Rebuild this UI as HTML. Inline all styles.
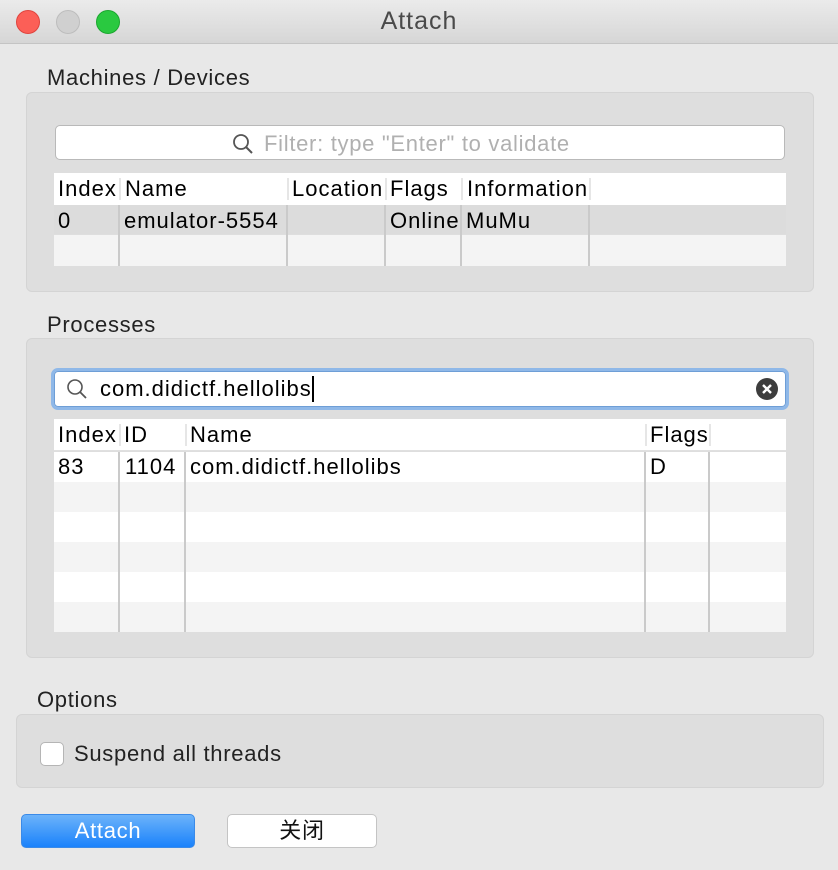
<!DOCTYPE html>
<html><head><meta charset="utf-8"><style>
*{margin:0;padding:0;box-sizing:border-box}
body{width:838px;height:870px;background:#e8e8e8;font-family:"Liberation Sans","Noto Sans CJK SC",sans-serif;font-size:22px;letter-spacing:0.7px;color:#1a1a1a;position:relative;overflow:hidden}
.a{position:absolute}
.title{left:0;top:0;width:838px;height:44px;background:linear-gradient(#ebebeb,#d6d6d6);border-bottom:1px solid #c4c4c4}
.dot{width:24px;height:24px;border-radius:50%;top:10px}
.box{background:#dedede;border:1px solid #d4d4d4;border-radius:6px}
.lbl{color:#222}
.cell{position:absolute;white-space:nowrap;color:#000;letter-spacing:1px}
.vl{position:absolute;width:2px;background:#cacaca}
.hd{position:absolute;width:2px;background:#e6e6e6}
</style></head><body>
<div class="a title"></div>
<div class="a dot" style="left:16px;background:#fc5f57;border:1px solid #e0443e"></div>
<div class="a dot" style="left:56px;background:#d0d0d0;border:1px solid #bdbdbd"></div>
<div class="a dot" style="left:96px;background:#2ac940;border:1px solid #1ba72f"></div>
<div class="a" style="left:0;width:838px;top:7px;text-align:center;font-size:25px;letter-spacing:1px;color:#4a4a4a">Attach</div>

<div class="a lbl" style="left:47px;top:65px">Machines / Devices</div>
<div class="a box" style="left:26px;top:92px;width:788px;height:200px"></div>
<div class="a" style="left:55px;top:125px;width:730px;height:35px;background:#fff;border:1px solid #b9b9b9;border-radius:5px"></div>
<svg class="a" style="left:232px;top:133px" width="22" height="22"><circle cx="9" cy="9" r="7" fill="none" stroke="#555" stroke-width="1.8"/><line x1="14" y1="14" x2="20" y2="20" stroke="#555" stroke-width="2"/></svg>
<div class="a" style="left:264px;top:131px;color:#b0b0b0">Filter: type "Enter" to validate</div>
<div class="a" style="left:54px;top:173px;width:732px;height:32px;background:#fff"></div>
<div class="a" style="left:54px;top:205px;width:732px;height:29px;background:#dcdcdc"></div>
<div class="a" style="left:54px;top:235px;width:732px;height:31px;background:#f4f4f4"></div>
<div class="hd" style="left:119px;top:178px;height:22px"></div><div class="hd" style="left:287px;top:178px;height:22px"></div><div class="hd" style="left:385px;top:178px;height:22px"></div><div class="hd" style="left:461px;top:178px;height:22px"></div><div class="hd" style="left:589px;top:178px;height:22px"></div>
<div class="vl" style="left:118px;top:205px;height:61px"></div><div class="vl" style="left:286px;top:205px;height:61px"></div><div class="vl" style="left:384px;top:205px;height:61px"></div><div class="vl" style="left:460px;top:205px;height:61px"></div><div class="vl" style="left:588px;top:205px;height:61px"></div>
<div class="cell" style="left:58px;top:176px">Index</div><div class="cell" style="left:125px;top:176px">Name</div><div class="cell" style="left:292px;top:176px">Location</div><div class="cell" style="left:390px;top:176px">Flags</div><div class="cell" style="left:467px;top:176px">Information</div>
<div class="cell" style="left:58px;top:208px">0</div><div class="cell" style="left:124px;top:208px">emulator-5554</div><div class="cell" style="left:390px;top:208px">Online</div><div class="cell" style="left:466px;top:208px">MuMu</div>

<div class="a lbl" style="left:47px;top:312px">Processes</div>
<div class="a box" style="left:26px;top:338px;width:788px;height:320px"></div>
<div class="a" style="left:51px;top:368px;width:738px;height:42px;border:3px solid #8fb8e8;border-radius:7px;background:#fff"></div>
<div class="a" style="left:54px;top:371px;width:732px;height:36px;border:1px solid #6e9ed6;border-radius:4px;background:#fff"></div>
<svg class="a" style="left:66px;top:378px" width="22" height="22"><circle cx="9" cy="9" r="7" fill="none" stroke="#555" stroke-width="1.6"/><line x1="14" y1="14" x2="20" y2="20" stroke="#555" stroke-width="1.8"/></svg>
<div class="a" style="left:100px;top:376px;color:#000;letter-spacing:1px">com.didictf.hellolibs<span style="display:inline-block;width:2px;height:26px;background:#000;vertical-align:-6px"></span></div>
<svg class="a" style="left:756px;top:378px" width="22" height="22"><circle cx="11" cy="11" r="11" fill="#3d3d3d"/><path d="M7 7L15 15M15 7L7 15" stroke="#fff" stroke-width="2.4"/></svg>
<div class="a" style="left:54px;top:419px;width:732px;height:32px;background:#fff;border-bottom:1px solid #e0e0e0"></div>
<div class="a" style="left:54px;top:452px;width:732px;height:30px;background:#fff"></div>
<div class="a" style="left:54px;top:482px;width:732px;height:30px;background:#f4f4f4"></div>
<div class="a" style="left:54px;top:512px;width:732px;height:30px;background:#fff"></div>
<div class="a" style="left:54px;top:542px;width:732px;height:30px;background:#f4f4f4"></div>
<div class="a" style="left:54px;top:572px;width:732px;height:30px;background:#fff"></div>
<div class="a" style="left:54px;top:602px;width:732px;height:30px;background:#f4f4f4"></div>
<div class="hd" style="left:119px;top:424px;height:22px"></div><div class="hd" style="left:185px;top:424px;height:22px"></div><div class="hd" style="left:645px;top:424px;height:22px"></div><div class="hd" style="left:709px;top:424px;height:22px"></div>
<div class="vl" style="left:118px;top:452px;height:180px"></div><div class="vl" style="left:184px;top:452px;height:180px"></div><div class="vl" style="left:644px;top:452px;height:180px"></div><div class="vl" style="left:708px;top:452px;height:180px"></div>
<div class="cell" style="left:58px;top:422px">Index</div><div class="cell" style="left:124px;top:422px">ID</div><div class="cell" style="left:190px;top:422px">Name</div><div class="cell" style="left:650px;top:422px">Flags</div>
<div class="cell" style="left:58px;top:454px">83</div><div class="cell" style="left:125px;top:454px">1104</div><div class="cell" style="left:190px;top:454px">com.didictf.hellolibs</div><div class="cell" style="left:650px;top:454px">D</div>

<div class="a lbl" style="left:37px;top:687px">Options</div>
<div class="a box" style="left:16px;top:714px;width:808px;height:74px"></div>
<div class="a" style="left:40px;top:742px;width:24px;height:24px;background:#fff;border:1px solid #b5b5b5;border-radius:5px"></div>
<div class="a" style="left:74px;top:741px;color:#222">Suspend all threads</div>

<div class="a" style="left:21px;top:814px;width:174px;height:34px;border-radius:5px;background:linear-gradient(#6cb3fa,#1a82fb);border:1px solid #3a8ae8;color:#fff;text-align:center;line-height:32px">Attach</div>
<div class="a" style="left:227px;top:814px;width:150px;height:34px;border-radius:5px;background:#fff;border:1px solid #c4c4c4;color:#111;text-align:center;line-height:32px">关闭</div>
</body></html>
